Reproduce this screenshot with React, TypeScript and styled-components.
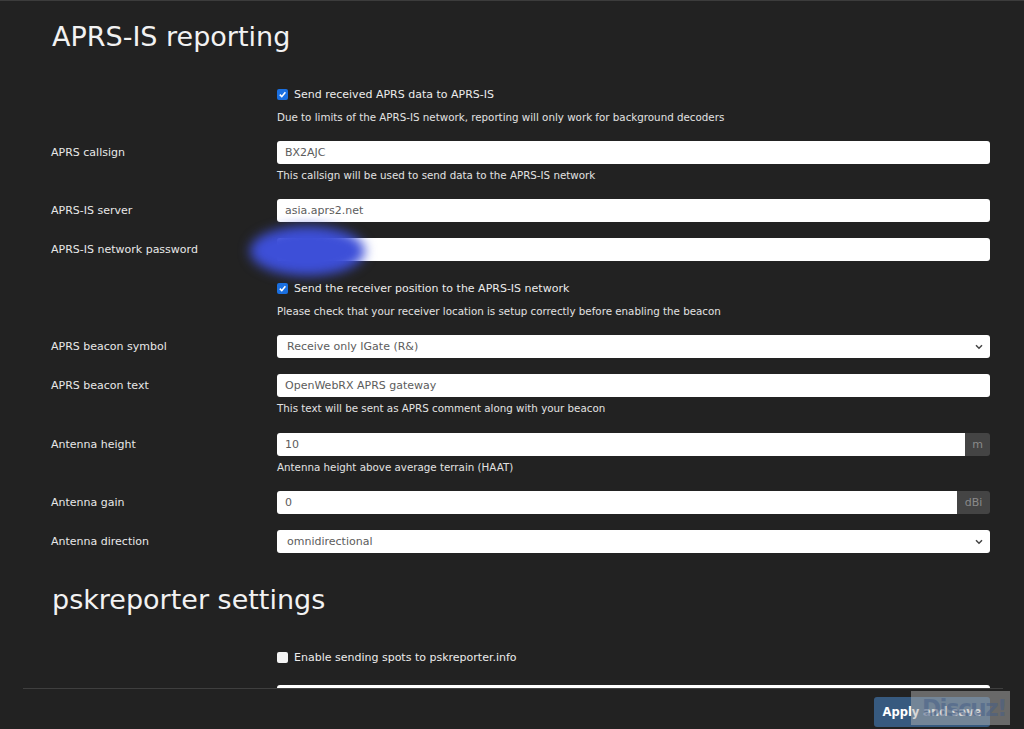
import React from "react";
import styled, { createGlobalStyle } from "styled-components";

const Global = createGlobalStyle`
  html, body { margin: 0; padding: 0; background: #222222; }
  body { font-family: "DejaVu Sans", "Open Sans", sans-serif; color: #e6e6e6; overflow: hidden; }
  * { box-sizing: border-box; }
`;

const Page = styled.div`
  height: 729px;
  display: flex;
  flex-direction: column;
  border-top: 1px solid #3c3c3c;
  position: relative;
`;

const Content = styled.div`
  flex: 1;
  overflow: hidden;
  padding: 0 34px 0 51px;
`;

const Heading = styled.h2<{ $top: number }>`
  font-size: 27px;
  font-weight: 400;
  line-height: 31px;
  margin: ${(p) => p.$top}px 0 31px 1px;
  color: #f2f2f2;
`;

const Row = styled.div<{ $gap?: number }>`
  display: grid;
  grid-template-columns: 226px 1fr;
  margin-bottom: ${(p) => p.$gap ?? 16}px;
  position: relative;
`;

const Label = styled.div`
  font-size: 11px;
  line-height: 23px;
  color: #e8e8e8;
`;

const Field = styled.div`
  display: flex;
  flex-direction: column;
`;

const Help = styled.div`
  font-size: 10.3px;
  line-height: 16px;
  margin-top: 3px;
  color: #e2e2e2;
`;

const CheckLine = styled.label`
  display: flex;
  align-items: center;
  gap: 6px;
  height: 23px;
  font-size: 11px;
  color: #ececec;
`;

const Box = styled.span<{ $on: boolean }>`
  width: 11px;
  height: 11px;
  border-radius: 2px;
  background: ${(p) => (p.$on ? "#1a6fe0" : "#f4f4f4")};
  display: inline-flex;
  align-items: center;
  justify-content: center;
  flex: none;
`;

const Input = styled.div`
  height: 23px;
  flex: none;
  background: #ffffff;
  border-radius: 3px;
  padding: 0 8px;
  display: flex;
  align-items: center;
  font-size: 11px;
  color: #5c5c5c;
  position: relative;
`;

const SelectBox = styled(Input)`
  padding-left: 10px;
`;

const Group = styled.div`
  display: flex;
  height: 23px;
`;

const GroupInput = styled(Input)`
  flex: 1;
  border-radius: 3px 0 0 3px;
`;

const Addon = styled.div<{ $w: number }>`
  width: ${(p) => p.$w}px;
  background: #444444;
  color: #8a8a8a;
  font-size: 11px;
  display: flex;
  align-items: center;
  justify-content: center;
  border-radius: 0 3px 3px 0;
`;

const Chevron = styled.svg`
  position: absolute;
  right: 7px;
  top: 9px;
`;

const Blur = styled.div`
  position: absolute;
  left: 199px;
  top: -12px;
  width: 115px;
  height: 50px;
  border-radius: 50%;
  background: #3d4fd8;
  filter: blur(6px);
`;

const Footer = styled.div`
  flex: none;
  height: 41px;
  margin: 0 21px 0 23px;
  border-top: 1px solid #3f3f3f;
  display: flex;
  justify-content: flex-end;
  align-items: flex-start;
  padding: 8px 13px 0 0;
  background: #222222;
`;

const Button = styled.button`
  height: 30px;
  width: 116px;
  border: none;
  border-radius: 3px;
  background: #375a7f;
  color: #ffffff;
  font-family: "DejaVu Sans", "Open Sans", sans-serif;
  font-size: 11.5px;
  font-weight: 700;
  padding: 0;
`;

const Watermark = styled.div`
  position: absolute;
  left: 911px;
  top: 690px;
  width: 99px;
  height: 34px;
  background: rgba(175, 175, 175, 0.5);
  color: rgba(70, 95, 135, 0.55);
  font-family: "DejaVu Sans", sans-serif;
  font-weight: 700;
  font-size: 23px;
  letter-spacing: -1.5px;
  line-height: 34px;
  padding-left: 11px;
  overflow: hidden;
  white-space: nowrap;
`;

const Check = ({ on, children }: { on: boolean; children: React.ReactNode }) => (
  <CheckLine>
    <Box $on={on}>
      {on && (
        <svg width="9" height="9" viewBox="0 0 10 10">
          <path d="M2 5.2 L4.2 7.4 L8.2 2.6" stroke="#fff" strokeWidth="1.8" fill="none" />
        </svg>
      )}
    </Box>
    {children}
  </CheckLine>
);

const Select = ({ value }: { value: string }) => (
  <SelectBox>
    {value}
    <Chevron width="8" height="6" viewBox="0 0 8 6">
      <path d="M1 1.2 L4 4.2 L7 1.2" stroke="#444" strokeWidth="1.5" fill="none" />
    </Chevron>
  </SelectBox>
);

export default function App() {
  return (
    <Page>
      <Global />
      <Content>
        <Heading $top={20}>APRS-IS reporting</Heading>

        <Row>
          <Label />
          <Field>
            <Check on>Send received APRS data to APRS-IS</Check>
            <Help>Due to limits of the APRS-IS network, reporting will only work for background decoders</Help>
          </Field>
        </Row>

        <Row>
          <Label>APRS callsign</Label>
          <Field>
            <Input>BX2AJC</Input>
            <Help>This callsign will be used to send data to the APRS-IS network</Help>
          </Field>
        </Row>

        <Row>
          <Label>APRS-IS server</Label>
          <Field>
            <Input>asia.aprs2.net</Input>
          </Field>
        </Row>

        <Row>
          <Label>APRS-IS network password</Label>
          <Field>
            <Input />
          </Field>
          <Blur />
        </Row>

        <Row>
          <Label />
          <Field>
            <Check on>Send the receiver position to the APRS-IS network</Check>
            <Help>Please check that your receiver location is setup correctly before enabling the beacon</Help>
          </Field>
        </Row>

        <Row>
          <Label>APRS beacon symbol</Label>
          <Field>
            <Select value="Receive only IGate (R&)" />
          </Field>
        </Row>

        <Row $gap={17}>
          <Label>APRS beacon text</Label>
          <Field>
            <Input>OpenWebRX APRS gateway</Input>
            <Help>This text will be sent as APRS comment along with your beacon</Help>
          </Field>
        </Row>

        <Row>
          <Label>Antenna height</Label>
          <Field>
            <Group>
              <GroupInput>10</GroupInput>
              <Addon $w={25}>m</Addon>
            </Group>
            <Help>Antenna height above average terrain (HAAT)</Help>
          </Field>
        </Row>

        <Row>
          <Label>Antenna gain</Label>
          <Field>
            <Group>
              <GroupInput>0</GroupInput>
              <Addon $w={33}>dBi</Addon>
            </Group>
          </Field>
        </Row>

        <Row>
          <Label>Antenna direction</Label>
          <Field>
            <Select value="omnidirectional" />
          </Field>
        </Row>

        <Heading $top={31}>pskreporter settings</Heading>

        <Row>
          <Label />
          <Field>
            <Check on={false}>Enable sending spots to pskreporter.info</Check>
          </Field>
        </Row>

        <Row>
          <Label />
          <Field>
            <Input />
          </Field>
        </Row>
      </Content>
      <Footer>
        <Button>Apply and save</Button>
      </Footer>
      <Watermark>Discuz!</Watermark>
    </Page>
  );
}
